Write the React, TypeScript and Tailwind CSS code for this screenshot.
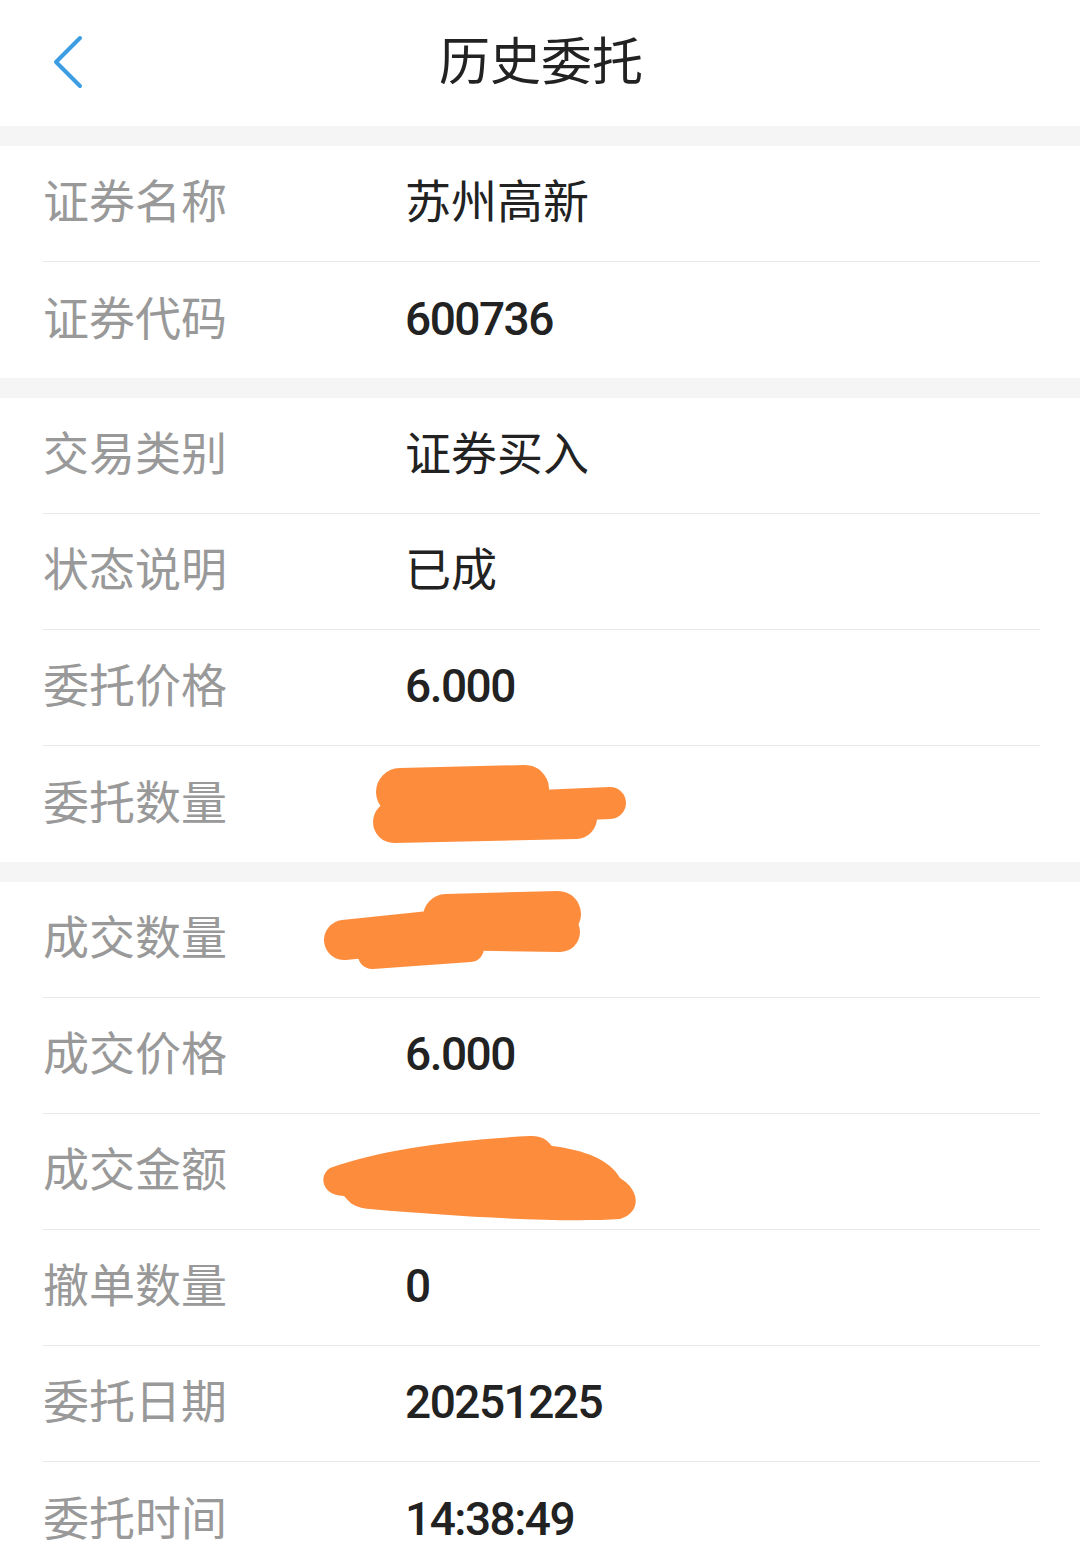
import { Fragment } from 'react'

type Row = { label: string; value?: string }

const SECTIONS: Row[][] = [
  [
    { label: '证券名称', value: '苏州高新' },
    { label: '证券代码', value: '600736' },
  ],
  [
    { label: '交易类别', value: '证券买入' },
    { label: '状态说明', value: '已成' },
    { label: '委托价格', value: '6.000' },
    { label: '委托数量' },
  ],
  [
    { label: '成交数量' },
    { label: '成交价格', value: '6.000' },
    { label: '成交金额' },
    { label: '撤单数量', value: '0' },
    { label: '委托日期', value: '20251225' },
    { label: '委托时间', value: '14:38:49' },
  ],
]

const FONT = "font-['Roboto','Noto_Sans_CJK_SC',sans-serif]"

function Scribbles() {
  // orange redaction marks drawn over the page
  return (
    <svg
      className="pointer-events-none absolute left-0 top-0"
      width="1080"
      height="1551"
      viewBox="0 0 1080 1551"
    >
      <g fill="none" stroke="#fd8c3c" strokeLinecap="round" strokeLinejoin="round">
        <path d="M400 792 L525 789" strokeWidth="48" />
        <path d="M394 822 L576 818" strokeWidth="42" />
        <path d="M540 806 L610 803" strokeWidth="32" />
        <path d="M446 917 L558 914" strokeWidth="46" />
        <path d="M344 940 L440 930 L560 932" strokeWidth="40" />
        <path d="M372 955 L470 948" strokeWidth="28" />
      </g>
      <path
        fill="#fd8c3c"
        d="M330 1168 C380 1150 450 1140 530 1136 C545 1136 548 1142 552 1146 C585 1150 610 1160 620 1178 C640 1190 642 1212 620 1219 C560 1223 450 1216 370 1209 C352 1208 348 1200 344 1196 C322 1196 318 1176 330 1168 Z"
      />
    </svg>
  )
}

export default function App() {
  return (
    <div className={`relative h-[1551px] w-[1080px] overflow-hidden bg-white ${FONT}`}>
      <header className="relative flex h-[126px] items-center justify-center">
        <svg
          className="absolute left-[50px] top-[34px]"
          width="36"
          height="56"
          viewBox="0 0 36 56"
        >
          <path
            d="M30 4 L6 28 L30 52"
            fill="none"
            stroke="#3c9de3"
            strokeWidth="4"
            strokeLinecap="round"
            strokeLinejoin="round"
          />
        </svg>
        <h1 className="pb-[2px] pl-[2px] text-[51px] leading-none text-[#222]">历史委托</h1>
      </header>

      {SECTIONS.map((section, i) => (
        <Fragment key={i}>
          <div className="h-[20px] bg-[#f5f5f5]" />
          <div className="bg-white">
            {section.map((r, j) => (
              <div key={r.label} className="pl-[43px] pr-[40px]">
                <div
                  className={`flex h-[116px] items-center pb-[3px] ${
                    j < section.length - 1 ? 'border-b border-[#e8e8e8]' : ''
                  }`}
                >
                  <span className="w-[362px] shrink-0 text-[46px] leading-none text-[#999]">
                    {r.label}
                  </span>
                  <span
                    className={`text-[46px] leading-none text-[#222] ${
                      r.value && /^[0-9.:]+$/.test(r.value)
                        ? 'font-medium tracking-[-1.5px]'
                        : ''
                    }`}
                  >
                    {r.value}
                  </span>
                </div>
              </div>
            ))}
          </div>
        </Fragment>
      ))}

      <Scribbles />
    </div>
  )
}
